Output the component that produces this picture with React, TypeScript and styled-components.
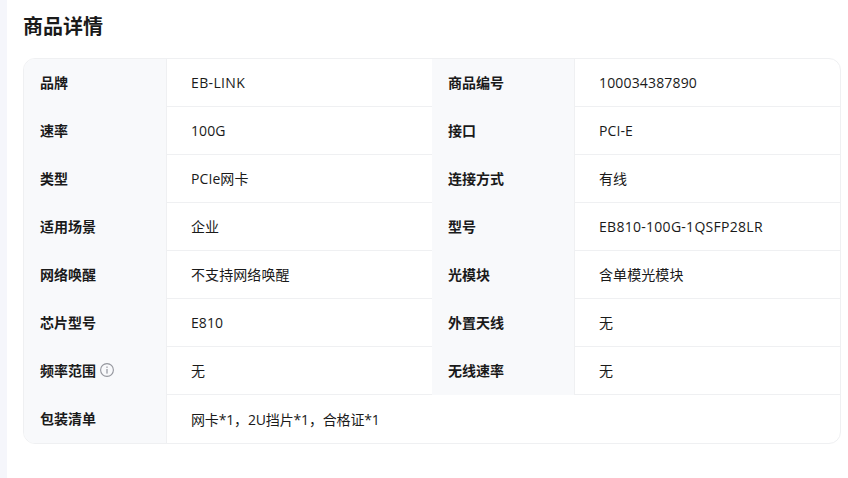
import { ReactNode } from "react";
import styled, { createGlobalStyle } from "styled-components";

const GlobalStyle = createGlobalStyle`
  html, body {
    margin: 0;
    padding: 0;
    background: #fff;
  }
  body {
    font-family: "Open Sans", "Noto Sans CJK SC", sans-serif;
  }
`;

const Page = styled.div`
  display: flex;
  width: 848px;
  height: 478px;
  overflow: hidden;
`;

const Strip = styled.div`
  flex: 0 0 7px;
  background: #f5f6fb;
`;

const Content = styled.div`
  flex: 1;
  padding: 0 7px 0 16px;
`;

const Title = styled.h2`
  margin: 0;
  padding-top: 1px;
  height: 57px;
  line-height: 52px;
  font-size: 20px;
  font-weight: 700;
  color: #1a1a1a;
`;

const SpecTable = styled.div`
  display: grid;
  grid-template-columns: 408px 408px;
  grid-auto-rows: 48px;
  width: 818px;
  box-sizing: border-box;
  border: 1px solid #eff0f2;
  border-radius: 12px;
  overflow: hidden;
`;

const SpecPair = styled.div`
  display: grid;
  grid-template-columns: 143px 1fr;
`;

const LastRow = styled(SpecPair)`
  grid-column: 1 / -1;
`;

const Label = styled.div`
  display: flex;
  align-items: center;
  gap: 4px;
  padding: 0 0 2px 16px;
  background: #f8f9fb;
  border-right: 1px solid #eff0f2;
  font-size: 14px;
  font-weight: 700;
  color: #1a1a1a;
`;

const Value = styled.div<{ $last?: boolean; $track?: number }>`
  display: flex;
  align-items: center;
  padding: 0 0 1px 24px;
  border-bottom: ${({ $last }) => ($last ? "none" : "1px solid #eff0f2")};
  font-size: 14px;
  letter-spacing: ${({ $track }) => $track ?? 0.08}px;
  color: #1a1a1a;
`;

const InfoIcon = styled.svg`
  width: 14px;
  height: 14px;
`;

interface ISpec {
  label: ReactNode;
  value: string;
  track?: number;
}

const specs: ISpec[][] = [
  [
    { label: "品牌", value: "EB-LINK", track: 0.36 },
    { label: "商品编号", value: "100034387890", track: 0.16 },
  ],
  [{ label: "速率", value: "100G" }, { label: "接口", value: "PCI-E" }],
  [{ label: "类型", value: "PCIe网卡" }, { label: "连接方式", value: "有线" }],
  [
    { label: "适用场景", value: "企业" },
    { label: "型号", value: "EB810-100G-1QSFP28LR", track: 0.28 },
  ],
  [{ label: "网络唤醒", value: "不支持网络唤醒" }, { label: "光模块", value: "含单模光模块" }],
  [{ label: "芯片型号", value: "E810" }, { label: "外置天线", value: "无" }],
  [
    {
      label: (
        <>
          频率范围
          <InfoIcon viewBox="0 0 14 14">
            <circle cx="7" cy="7" r="6.4" fill="none" stroke="#94969d" strokeWidth="1.1" />
            <rect x="6.4" y="6" width="1.2" height="4.6" fill="#94969d" />
            <rect x="6.4" y="3.5" width="1.2" height="1.4" fill="#94969d" />
          </InfoIcon>
        </>
      ),
      value: "无",
    },
    { label: "无线速率", value: "无" },
  ],
];

const App = () => {
  return (
    <>
      <GlobalStyle />
      <Page>
        <Strip />
        <Content>
          <Title>商品详情</Title>
          <SpecTable>
            {specs.map((row, i) =>
              row.map((spec, j) => (
                <SpecPair key={`${i}-${j}`}>
                  <Label>{spec.label}</Label>
                  <Value $track={spec.track}>{spec.value}</Value>
                </SpecPair>
              ))
            )}
            <LastRow>
              <Label>包装清单</Label>
              <Value $last $track={-0.16}>
                网卡*1，2U挡片*1，合格证*1
              </Value>
            </LastRow>
          </SpecTable>
        </Content>
      </Page>
    </>
  );
};

export default App;
